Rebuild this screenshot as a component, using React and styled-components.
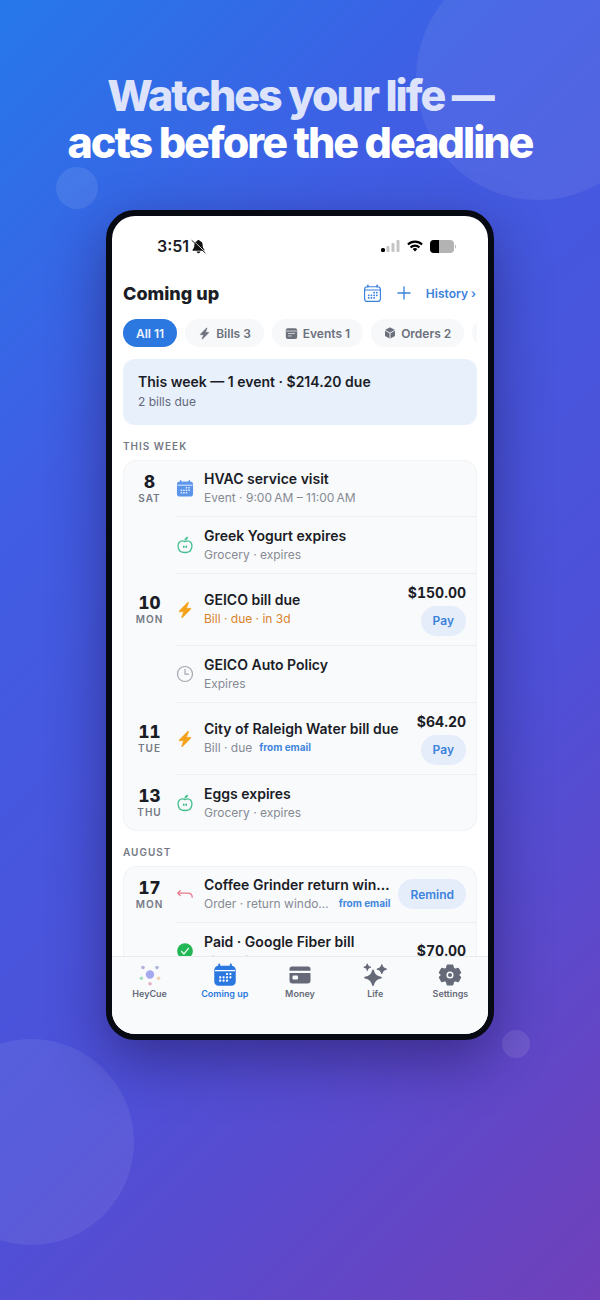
import React, { useState } from "react";
import styled, { createGlobalStyle } from "styled-components";

const GlobalStyle = createGlobalStyle`
  * { box-sizing: border-box; }
  body {
    margin: 0;
    font-family: Inter, "Liberation Sans", sans-serif;
    color: #1b1d26;
  }
  button { font-family: inherit; border: none; cursor: pointer; }
`;

const Stage = styled.main`
  position: relative;
  overflow: hidden;
  min-height: 100vh;
  padding: 72px 24px;
  display: flex;
  flex-direction: column;
  align-items: center;
  gap: 44px;
  background: linear-gradient(135deg, #2678ea 0%, #405de3 28%, #4e50d8 64%, #7040ba 100%);
`;
const Bubble = styled.div`
  position: absolute;
  width: ${(p) => p.$size}px;
  height: ${(p) => p.$size}px;
  border-radius: 50%;
  background: rgba(255, 255, 255, ${(p) => p.$alpha});
`;
const TopBubble = styled(Bubble)`
  top: -44px;
  right: -60px;
`;
const SmallBubble = styled(Bubble)`
  top: 167px;
  left: 56px;
`;
const BottomBubble = styled(Bubble)`
  top: 1039px;
  left: -72px;
`;
const DotBubble = styled(Bubble)`
  top: 1030px;
  right: 70px;
`;
const Headline = styled.h1`
  position: relative;
  margin: 0;
  font-size: 43px;
  line-height: 47px;
  font-weight: 800;
  letter-spacing: -2px;
  text-align: center;
  color: #fff;
`;
const Soft = styled.span`
  display: block;
  color: #dce3fb;
`;

const Phone = styled.section`
  position: relative;
  width: 100%;
  max-width: 388px;
  aspect-ratio: 388 / 830;
  display: flex;
  flex-direction: column;
  overflow: hidden;
  border: 6px solid #070a12;
  border-radius: 29px;
  background: #fff;
  box-shadow: 0 20px 56px rgba(25, 8, 60, 0.45);
`;
const StatusBar = styled.div`
  display: flex;
  align-items: center;
  justify-content: space-between;
  height: 60px;
  padding: 0 31px 0 45px;
  font-size: 16px;
  font-weight: 600;
`;
const StatusGroup = styled.div`
  display: flex;
  align-items: center;
  gap: ${(p) => p.$gap}px;
`;
const Header = styled.header`
  display: flex;
  align-items: center;
  justify-content: space-between;
  height: 34px;
  padding: 0 12px 0 11px;
`;
const Title = styled.h2`
  margin: 0;
  font-size: 18px;
  font-weight: 800;
`;
const Actions = styled.div`
  display: flex;
  align-items: center;
  gap: 13px;
`;
const PlainButton = styled.button`
  display: flex;
  padding: 0;
  background: none;
  color: #3b82dc;
`;
const HistoryLink = styled.a`
  color: #3b82dc;
  font-size: 12px;
  font-weight: 600;
  text-decoration: none;
`;
const Chips = styled.div`
  display: flex;
  flex-shrink: 0;
  gap: 8px;
  margin: 9px 11px 12px;
  overflow: hidden;
`;
const Chip = styled.button`
  display: flex;
  flex-shrink: 0;
  align-items: center;
  gap: 5px;
  height: 28px;
  padding: 0 13px;
  border-radius: 14px;
  background: ${(p) => (p.$active ? "#2b78e0" : "#f7f8fa")};
  color: ${(p) => (p.$active ? "#e9f2ff" : "#6c717c")};
  font-size: 12px;
  font-weight: 600;
`;

const Feed = styled.div`
  flex: 1;
  min-height: 0;
  overflow: hidden;
  padding: 0 11px;
`;
const Summary = styled.div`
  height: 66px;
  padding: 14px 15px;
  border-radius: 12px;
  background: #e8f0fc;
`;
const SummaryTitle = styled.div`
  font-size: 14px;
  line-height: 18px;
  font-weight: 600;
`;
const SummaryText = styled.div`
  margin-top: 2px;
  font-size: 12px;
  line-height: 18px;
  color: #62697a;
`;
const GroupLabel = styled.h3`
  margin: 14px 0 6px;
  font-size: 10px;
  line-height: 15px;
  font-weight: 600;
  letter-spacing: 1px;
  color: #747985;
`;
const Card = styled.div`
  border-radius: 14px;
  background: #f9fafc;
  box-shadow: inset 0 0 0 1px #f1f3f5;
`;
const Row = styled.div`
  display: flex;
  min-height: ${(p) => (p.$tall ? 72 : 57)}px;
  &:last-child { min-height: 56px; }
`;
const DateCell = styled.div`
  display: flex;
  flex-direction: column;
  align-items: center;
  justify-content: center;
  width: 53px;
  flex-shrink: 0;
`;
const Day = styled.div`
  font-size: 17px;
  line-height: 18px;
  font-weight: 800;
  font-variant-numeric: tabular-nums;
`;
const Weekday = styled.div`
  font-size: 10px;
  line-height: 14px;
  font-weight: 600;
  letter-spacing: 1px;
  color: #747985;
`;
const RowBody = styled.div`
  flex: 1;
  min-width: 0;
  display: flex;
  align-items: center;
  padding-right: 11px;
  border-bottom: ${(p) => (p.$last ? "none" : "1px solid #eceef1")};
`;
const Texts = styled.div`
  flex: 1;
  min-width: 0;
  margin: 0 8px 0 10px;
`;
const RowTitle = styled.div`
  font-size: 14px;
  line-height: 18px;
  font-weight: 600;
  white-space: nowrap;
  overflow: hidden;
  text-overflow: ellipsis;
`;
const RowMeta = styled.div`
  display: flex;
  align-items: center;
  gap: 7px;
  font-size: 12px;
  line-height: 19px;
  color: ${(p) => (p.$warn ? "#d9822b" : "#868a93")};
`;
const MetaText = styled.span`
  white-space: nowrap;
  overflow: hidden;
  text-overflow: ellipsis;
`;
const Source = styled.span`
  flex-shrink: 0;
  font-size: 10px;
  font-weight: 700;
  color: #4187dc;
`;
const Side = styled.div`
  display: flex;
  flex-direction: column;
  align-items: flex-end;
  gap: 4px;
`;
const Amount = styled.div`
  font-size: 14px;
  line-height: 18px;
  font-weight: 700;
  font-variant-numeric: tabular-nums;
`;
const Pill = styled.button`
  height: 30px;
  padding: 0 12px;
  border-radius: 15px;
  background: #e5edfa;
  color: #3b82dc;
  font-size: 12px;
  font-weight: 600;
`;

const TabBar = styled.nav`
  display: grid;
  grid-template-columns: repeat(5, 1fr);
  flex-shrink: 0;
  height: 78px;
  border-top: 1px solid #e9ecef;
  background: #f9fafc;
`;
const Tab = styled.a`
  display: flex;
  flex-direction: column;
  align-items: center;
  padding-top: 6px;
  color: ${(p) => (p.$active ? "#2b78e0" : "#666a78")};
  text-decoration: none;
`;
const TabLabel = styled.span`
  font-size: 9px;
  line-height: 14px;
  font-weight: 600;
`;

const CalendarIcon = ({ size = 19, filled, cut = "#fff" }) => {
  const ink = filled ? cut : "currentColor";
  const dots = [
    [14, 11], [17.4, 11],
    [7.2, 14.3], [10.6, 14.3], [14, 14.3], [17.4, 14.3],
    [7.2, 17.6], [10.6, 17.6], [14, 17.6],
  ];
  return (
    <svg viewBox="0 0 24 24" width={size} height={size} fill="none" aria-hidden>
      <rect x="2" y="3.5" width="20" height="18.5" rx="3.5" fill={filled ? "currentColor" : "none"} stroke="currentColor" strokeWidth="1.5" />
      <path d="M6.2 1.6v2M17.8 1.6v2" stroke="currentColor" strokeWidth="2" strokeLinecap="round" />
      <path d="M2 7.6h20" stroke={ink} strokeWidth="1.3" />
      {dots.map(([x, y]) => (
        <rect key={`${x}-${y}`} x={x - 1.1} y={y - 1.1} width="2.2" height="2.2" rx="0.8" fill={ink} />
      ))}
    </svg>
  );
};
const BoltIcon = ({ size = 22 }) => (
  <svg viewBox="0 0 24 24" width={size} height={size} fill="currentColor" stroke="currentColor" strokeWidth="0.8" strokeLinejoin="round" aria-hidden>
    <path d="M15.8 1.8 4.2 13.4c-.4.4-.2 1 .4 1h5.600L7.600 21.600c-.3.8.4 1.100.9.6L19.800 10.800c.4-.4.2-1-.4-1h-5.500l2.800-7.300c.3-.8-.4-1.200-.9-.7z" />
  </svg>
);
const AppleIcon = () => (
  <svg viewBox="0 0 24 24" width="20" height="20" fill="none" stroke="currentColor" strokeWidth="1.7" strokeLinecap="round" strokeLinejoin="round" aria-hidden>
    <path d="M12 7.600C9.800 6.300 6.500 6.200 4.400 8.300 1.900 11 2.400 16.400 4.700 19.500c1.800 2.400 3.400 2.500 7.300 2.500s5.500-.1 7.300-2.500c2.300-3.100 2.800-8.500.3-11.200C17.500 6.200 14.200 6.300 12 7.600z" />
    <path d="M11.900 5.300c0-2.300 1.300-3.600 3.700-4 .2 2.200-1.400 3.800-3.700 4z" fill="currentColor" strokeWidth="0.8" />
    <path d="M10.400 13.600v1.400M13.600 13.600v1.400" strokeWidth="2.200" />
  </svg>
);
const ClockIcon = () => (
  <svg viewBox="0 0 24 24" width="18" height="18" fill="none" stroke="currentColor" strokeWidth="1.6" strokeLinecap="round" strokeLinejoin="round" aria-hidden>
    <circle cx="12" cy="12" r="10" />
    <path d="M12 5.800v6.400h4.600" />
  </svg>
);
const ReturnIcon = () => (
  <svg viewBox="0 0 24 24" width="20" height="20" fill="none" stroke="currentColor" strokeWidth="1.7" strokeLinecap="round" strokeLinejoin="round" aria-hidden>
    <path d="M5.600 7.600 2.200 10.800l3.400 3.200M2.200 10.800h13.800c3.800 0 5.600 1.800 5.600 5.600" />
  </svg>
);
const PaidIcon = () => (
  <svg viewBox="0 0 24 24" width="18" height="18" aria-hidden>
    <circle cx="12" cy="12" r="10.500" fill="currentColor" />
    <path d="m7.500 12.600 3.100 3.300 6-7.400" fill="none" stroke="#e9fbef" strokeWidth="1.800" strokeLinecap="round" strokeLinejoin="round" />
  </svg>
);
const EventsIcon = () => (
  <svg viewBox="0 0 24 24" width="13" height="13" aria-hidden>
    <rect x="1.500" y="2.500" width="21" height="19.500" rx="3.500" fill="currentColor" />
    <path d="M2 7.500h20M5.500 12h13M5.500 16.500h7" fill="none" stroke="#f7f8fa" strokeWidth="1.300" />
  </svg>
);
const BoxIcon = () => (
  <svg viewBox="0 0 24 24" width="12" height="12" aria-hidden>
    <path d="M12 2.500 20.500 7v10L12 21.500 3.500 17V7z" fill="currentColor" stroke="currentColor" strokeWidth="3" strokeLinejoin="round" />
    <path d="m2 6.600 10 5.400 10-5.400M12 12v11.500" fill="none" stroke="#f7f8fa" strokeWidth="1.800" />
  </svg>
);
const PlusIcon = () => (
  <svg viewBox="0 0 24 24" width="18" height="18" fill="none" stroke="currentColor" strokeWidth="1.800" strokeLinecap="round" aria-hidden>
    <path d="M12 4v16M4 12h16" />
  </svg>
);
const BellOffIcon = () => (
  <svg viewBox="0 0 24 24" width="15" height="15" aria-hidden>
    <path d="M12 1.500c-1.300 0-2 .8-2 1.800-3 .8-4.600 3-4.600 6 0 4.200-.8 5.500-2.600 7.300-.9 1-.4 2.200.8 2.200h16.800c1.200 0 1.700-1.200.8-2.200-1.800-1.800-2.600-3.100-2.600-7.300 0-3-1.600-5.200-4.600-6 0-1-.7-1.800-2-1.800zM9 20c.3 1.600 1.500 2.600 3 2.600s2.700-1 3-2.600z" fill="#111" />
    <path d="m2.500 2 20.500 19" stroke="#fff" strokeWidth="1.500" />
    <path d="m1.500 2.500 21 19.500" stroke="#111" strokeWidth="1.500" strokeLinecap="round" />
  </svg>
);
const SignalIcon = () => (
  <svg viewBox="0 0 19 12" width="19" height="12" aria-hidden>
    <rect x="0" y="8" width="4" height="4" rx="1.500" fill="#000" />
    <rect x="5.500" y="6" width="3" height="6" rx="1" fill="#c4c4c4" />
    <rect x="10.500" y="3" width="3" height="9" rx="1" fill="#c4c4c4" />
    <rect x="15.500" y="0" width="3" height="12" rx="1" fill="#c4c4c4" />
  </svg>
);
const WifiIcon = () => (
  <svg viewBox="0 0 18 13" width="16" height="12" fill="none" stroke="#000" strokeWidth="2.300" aria-hidden>
    <path d="M1 4.800a11.500 11.500 0 0 1 16 0" />
    <path d="M4 8.200a7 7 0 0 1 10 0" />
    <path d="M9 12.800 6.300 10a4 4 0 0 1 5.400 0z" fill="#000" stroke="none" />
  </svg>
);
const BatteryIcon = () => (
  <svg viewBox="0 0 27 13" width="27" height="13" aria-hidden>
    <rect x="0" y="0" width="24" height="13" rx="4" fill="#b3b3b3" />
    <path d="M4 0h5v13H4a4 4 0 0 1-4-4V4a4 4 0 0 1 4-4z" fill="#000" />
    <path d="M25 4.500c1.300.3 1.300 3.700 0 4z" fill="#b3b3b3" />
  </svg>
);
const CueIcon = () => (
  <svg viewBox="0 0 24 24" width="24" height="24" aria-hidden>
    <circle cx="12" cy="11.500" r="4.200" fill="#a5aaf0" />
    <circle cx="5" cy="4.500" r="1.800" fill="#b7aedd" />
    <circle cx="19" cy="4.500" r="1.800" fill="#aeb6da" />
    <circle cx="3.400" cy="15.200" r="1.800" fill="#a5e0c0" />
    <circle cx="20.600" cy="15.200" r="1.800" fill="#f2d2b4" />
    <circle cx="12" cy="20.700" r="1.800" fill="#e8b0c4" />
  </svg>
);
const MoneyIcon = () => (
  <svg viewBox="0 0 24 24" width="24" height="24" aria-hidden>
    <path d="M4 3.500h16A2.500 2.500 0 0 1 22.500 6v1.800h-21V6A2.500 2.500 0 0 1 4 3.500zM1.500 10h21v7.500a3 3 0 0 1-3 3h-15a3 3 0 0 1-3-3z" fill="currentColor" />
    <rect x="4.500" y="12.500" width="5.500" height="4" rx="1.200" fill="#f9fafc" />
  </svg>
);
const LifeIcon = () => (
  <svg viewBox="0 0 24 24" width="24" height="24" fill="currentColor" stroke="currentColor" strokeLinejoin="round" aria-hidden>
    <path d="M10 7.500c.9 4.400 2.900 6.400 7.900 7.200-5 .8-7 2.900-7.900 7.500-.9-4.600-2.900-6.700-7.900-7.500 5-.8 7-2.800 7.900-7.200z" strokeWidth="1.800" />
    <path d="M18.800 1.800c.6 2.600 1.700 3.700 4.500 4.300-2.800.6-3.900 1.700-4.500 4.300-.6-2.600-1.700-3.700-4.500-4.300 2.800-.6 3.900-1.700 4.500-4.300z" strokeWidth="1.300" />
    <path d="M4.300.800c.5 2.100 1.300 2.900 3.500 3.400-2.200.5-3 1.300-3.500 3.400C3.800 5.500 3 4.700.8 4.200 3 3.700 3.800 2.900 4.300.800z" />
  </svg>
);
const GearIcon = () => (
  <svg viewBox="0 0 24 24" width="24" height="24" aria-hidden>
    <path d="M9.500 2.500h5l.8 3 1.800 1 3-.8 2.200 4-2.200 2.300 2.200 2.300-2.200 4-3-.8-1.800 1-.8 3h-5l-.8-3-1.800-1-3 .8-2.200-4L3.900 12 1.700 9.700l2.200-4 3 .8 1.800-1z" fill="currentColor" stroke="currentColor" strokeWidth="1.800" strokeLinejoin="round" />
    <circle cx="12" cy="12" r="2.800" fill="none" stroke="#f9fafc" strokeWidth="1.500" />
  </svg>
);

const IconCell = styled.span`
  display: flex;
  align-items: center;
  justify-content: center;
  flex-shrink: 0;
  width: 18px;
  color: ${(p) => p.$color};
`;

const icons = {
  event: { color: "#5b95ea", node: <CalendarIcon filled cut="#e6efff" /> },
  grocery: { color: "#41bd8b", node: <AppleIcon /> },
  bill: { color: "#f2a31b", node: <BoltIcon /> },
  clock: { color: "#a3a7b0", node: <ClockIcon /> },
  order: { color: "#e8798c", node: <ReturnIcon /> },
  paid: { color: "#22b755", node: <PaidIcon /> },
};

const filters = [
  { label: "All 11" },
  { label: "Bills 3", icon: <BoltIcon size={13} /> },
  { label: "Events 1", icon: <EventsIcon /> },
  { label: "Orders 2", icon: <BoxIcon /> },
  { label: "Groceries 2" },
];

const groups = [
  {
    label: "THIS WEEK",
    items: [
      { day: "8", weekday: "SAT", type: "event", title: "HVAC service visit", meta: "Event · 9:00\u2009AM – 11:00\u2009AM" },
      { type: "grocery", title: "Greek Yogurt expires", meta: "Grocery · expires" },
      { day: "10", weekday: "MON", type: "bill", title: "GEICO bill due", meta: "Bill · due · in 3d", warn: true, amount: "$150.00", action: "Pay" },
      { type: "clock", title: "GEICO Auto Policy", meta: "Expires" },
      { day: "11", weekday: "TUE", type: "bill", title: "City of Raleigh Water bill due", meta: "Bill · due", email: true, amount: "$64.20", action: "Pay" },
      { day: "13", weekday: "THU", type: "grocery", title: "Eggs expires", meta: "Grocery · expires" },
    ],
  },
  {
    label: "AUGUST",
    items: [
      { day: "17", weekday: "MON", type: "order", title: "Coffee Grinder return window", meta: "Order · return window closes", email: true, action: "Remind" },
      { type: "paid", title: "Paid · Google Fiber bill", meta: "Bill · paid", amount: "$70.00" },
    ],
  },
];

const tabs = [
  { label: "HeyCue", icon: <CueIcon /> },
  { label: "Coming up", icon: <CalendarIcon size={24} filled />, active: true },
  { label: "Money", icon: <MoneyIcon /> },
  { label: "Life", icon: <LifeIcon /> },
  { label: "Settings", icon: <GearIcon /> },
];

const AgendaRow = ({ item, last }) => (
  <Row $tall={item.amount && item.action}>
    <DateCell>
      {item.day && <Day>{item.day}</Day>}
      {item.weekday && <Weekday>{item.weekday}</Weekday>}
    </DateCell>
    <RowBody $last={last}>
      <IconCell $color={icons[item.type].color}>{icons[item.type].node}</IconCell>
      <Texts>
        <RowTitle>{item.title}</RowTitle>
        <RowMeta $warn={item.warn}>
          <MetaText>{item.meta}</MetaText>
          {item.email && <Source>from email</Source>}
        </RowMeta>
      </Texts>
      {(item.amount || item.action) && (
        <Side>
          {item.amount && <Amount>{item.amount}</Amount>}
          {item.action && <Pill>{item.action}</Pill>}
        </Side>
      )}
    </RowBody>
  </Row>
);

const App = () => {
  const [filter, setFilter] = useState("All 11");

  return (
    <>
      <GlobalStyle />
      <Stage>
        <TopBubble $size={244} $alpha={0.07} />
        <SmallBubble $size={42} $alpha={0.09} />
        <BottomBubble $size={206} $alpha={0.07} />
        <DotBubble $size={28} $alpha={0.1} />
        <Headline>
          <Soft>Watches your life —</Soft>
          acts before the deadline
        </Headline>

        <Phone>
          <StatusBar>
            <StatusGroup $gap={2}>
              <span>3:51</span>
              <BellOffIcon />
            </StatusGroup>
            <StatusGroup $gap={7}>
              <SignalIcon />
              <WifiIcon />
              <BatteryIcon />
            </StatusGroup>
          </StatusBar>

          <Header>
            <Title>Coming up</Title>
            <Actions>
              <PlainButton aria-label="Calendar">
                <CalendarIcon />
              </PlainButton>
              <PlainButton aria-label="Add">
                <PlusIcon />
              </PlainButton>
              <HistoryLink href="#history">History ›</HistoryLink>
            </Actions>
          </Header>

          <Chips>
            {filters.map((f) => (
              <Chip key={f.label} $active={filter === f.label} onClick={() => setFilter(f.label)}>
                {f.icon}
                {f.label}
              </Chip>
            ))}
          </Chips>

          <Feed>
            <Summary>
              <SummaryTitle>This week — 1 event · $214.20 due</SummaryTitle>
              <SummaryText>2 bills due</SummaryText>
            </Summary>
            {groups.map((g) => (
              <React.Fragment key={g.label}>
                <GroupLabel>{g.label}</GroupLabel>
                <Card>
                  {g.items.map((item, i) => (
                    <AgendaRow key={item.title} item={item} last={i === g.items.length - 1} />
                  ))}
                </Card>
              </React.Fragment>
            ))}
          </Feed>

          <TabBar>
            {tabs.map((t) => (
              <Tab key={t.label} href="#" $active={t.active}>
                {t.icon}
                <TabLabel>{t.label}</TabLabel>
              </Tab>
            ))}
          </TabBar>
        </Phone>
      </Stage>
    </>
  );
};

export default App;
